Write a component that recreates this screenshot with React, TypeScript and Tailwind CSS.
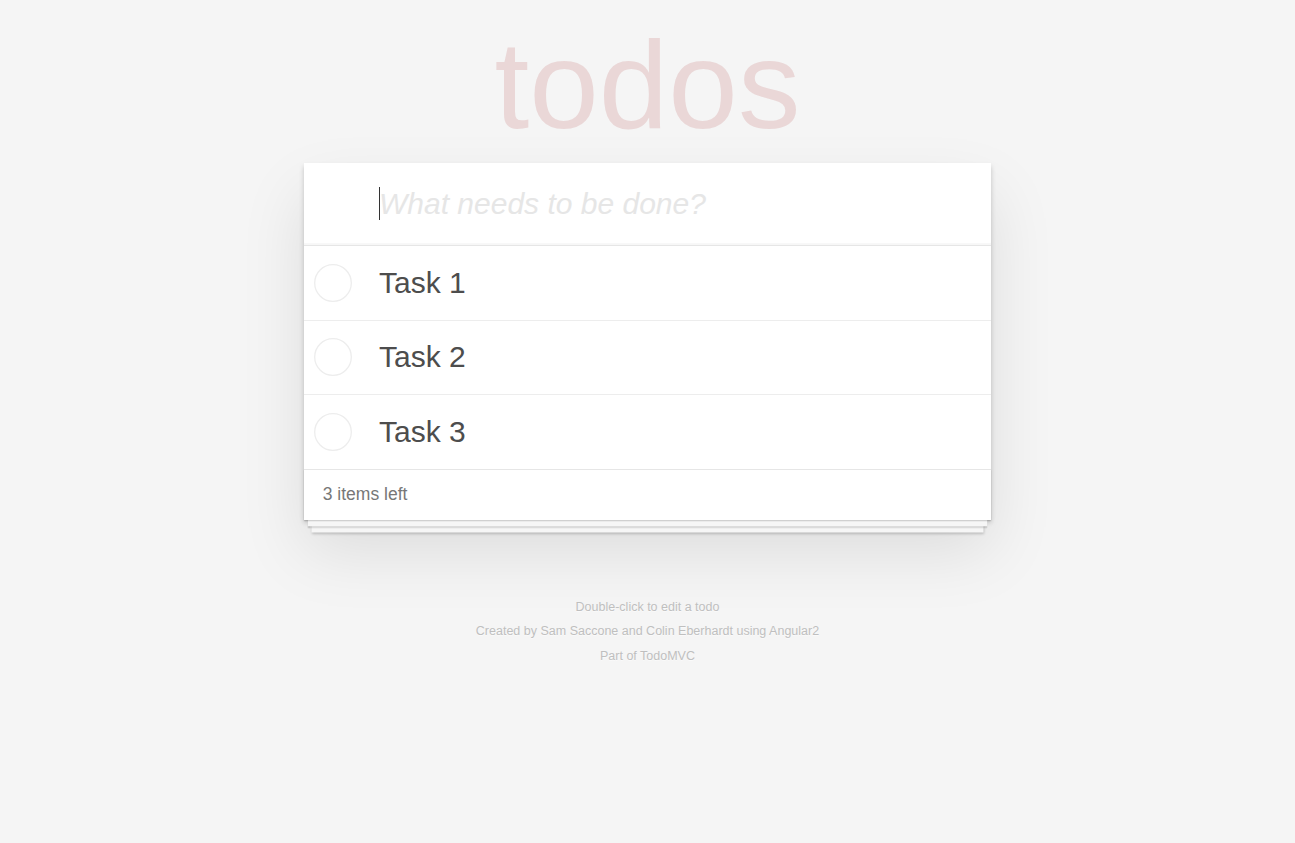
import React, { useState } from 'react';

interface Todo {
  id: number;
  title: string;
  completed: boolean;
}

const INITIAL_TODOS: Todo[] = [
  { id: 1, title: 'Task 1', completed: false },
  { id: 2, title: 'Task 2', completed: false },
  { id: 3, title: 'Task 3', completed: false },
];

const ToggleCircle: React.FC<{ checked: boolean }> = ({ checked }) => (
  <svg width="38" height="38" viewBox="0 0 38 38" className="block">
    <circle cx="19" cy="19" r="18.3" fill="none" stroke="#ededed" strokeWidth="1.3" />
    {checked && <path d="M10 19l6 6 12-13" fill="none" stroke="#5dc2af" strokeWidth="2.5" />}
  </svg>
);

const App: React.FC = () => {
  const [todos, setTodos] = useState<Todo[]>(INITIAL_TODOS);
  const [newTitle, setNewTitle] = useState('');

  const handleSubmit = (e: React.FormEvent) => {
    e.preventDefault();
    if (newTitle.trim()) {
      setTodos([...todos, { id: Date.now(), title: newTitle.trim(), completed: false }]);
      setNewTitle('');
    }
  };

  const toggle = (id: number) => {
    setTodos(todos.map((t) => (t.id === id ? { ...t, completed: !t.completed } : t)));
  };

  const remaining = todos.filter((t) => !t.completed).length;

  return (
    <div className="min-h-screen bg-[#f5f5f5] text-[#4d4d4d] font-['Liberation_Sans',Arial,sans-serif] pt-[22px]">
      <h1 className="h-[125px] leading-[125px] text-center text-[125px] font-thin text-[rgba(175,47,47,0.15)] mb-[16px]">
        todos
      </h1>

      <section className="w-[687px] mx-auto bg-white shadow-[0_2.5px_5px_0_rgba(0,0,0,0.2),0_31px_62px_0_rgba(0,0,0,0.1)]">
        <form onSubmit={handleSubmit} className="relative shadow-[inset_0_-2px_1px_rgba(0,0,0,0.03)]">
          <input
            autoFocus
            value={newTitle}
            onChange={(e) => setNewTitle(e.target.value)}
            placeholder="What needs to be done?"
            className={
              'block w-full bg-transparent outline-none pl-[75px] pr-[20px] py-[20px] text-[30px] leading-[42px] text-[#4d4d4d] placeholder:italic placeholder:text-[#e6e6e6] ' +
              (newTitle ? 'caret-[#333]' : 'caret-transparent')
            }
          />
          {/* caret shown while the field is still empty */}
          {!newTitle && <span className="pointer-events-none absolute left-[379px] -ml-[304px] top-[24px] w-px h-[33px] bg-[#333]" />}
        </form>

        <ul className="border-t border-[#e6e6e6]">
          {todos.map((todo) => (
            <li key={todo.id} className="flex items-center border-b border-[#ededed] last:border-b-0">
              <button onClick={() => toggle(todo.id)} className="w-[75px] pl-[10px] shrink-0 flex items-center">
                <ToggleCircle checked={todo.completed} />
              </button>
              <label
                className={
                  'flex-1 py-[18.75px] pr-[75px] text-[30px] leading-[36px] ' +
                  (todo.completed ? 'text-[#d9d9d9] line-through' : 'text-[#4d4d4d]')
                }
              >
                {todo.title}
              </label>
            </li>
          ))}
        </ul>

        <footer className="border-t border-[#e6e6e6] px-[18.75px] py-[12.5px] h-[51px] flex items-center text-[17.5px] text-[#777] shadow-[0_1.25px_1.25px_rgba(0,0,0,0.2),0_10px_0_-3.75px_#f6f6f6,0_11.25px_1.25px_-3.75px_rgba(0,0,0,0.2),0_20px_0_-7.5px_#f6f6f6,0_21.25px_2.5px_-7.5px_rgba(0,0,0,0.2)]">
          <span>
            {remaining} {remaining === 1 ? 'item' : 'items'} left
          </span>
        </footer>
      </section>

      <footer className="mt-[81px] text-center text-[12.5px] leading-[12.5px] text-[#bfbfbf] [text-shadow:0_1px_0_rgba(255,255,255,0.5)] flex flex-col gap-[12px]">
        <p>Double-click to edit a todo</p>
        <p>
          Created by <a href="#">Sam Saccone</a> and <a href="#">Colin Eberhardt</a> using Angular2
        </p>
        <p>
          Part of <a href="#">TodoMVC</a>
        </p>
      </footer>
    </div>
  );
};

export default App;
